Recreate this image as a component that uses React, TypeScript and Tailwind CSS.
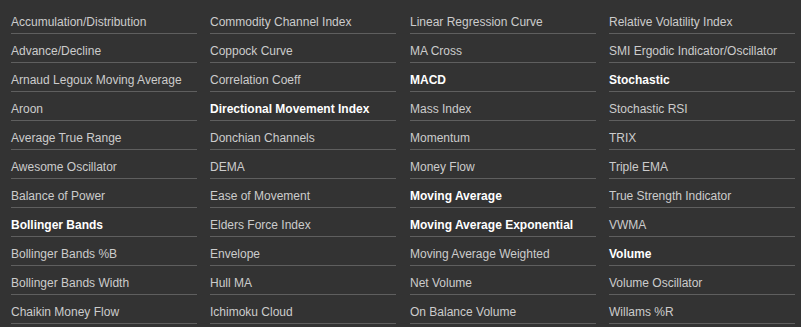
const columns: string[][] = [
  [
    'Accumulation/Distribution',
    'Advance/Decline',
    'Arnaud Legoux Moving Average',
    'Aroon',
    'Average True Range',
    'Awesome Oscillator',
    'Balance of Power',
    '*Bollinger Bands',
    'Bollinger Bands %B',
    'Bollinger Bands Width',
    'Chaikin Money Flow',
  ],
  [
    'Commodity Channel Index',
    'Coppock Curve',
    'Correlation Coeff',
    '*Directional Movement Index',
    'Donchian Channels',
    'DEMA',
    'Ease of Movement',
    'Elders Force Index',
    'Envelope',
    'Hull MA',
    'Ichimoku Cloud',
  ],
  [
    'Linear Regression Curve',
    'MA Cross',
    '*MACD',
    'Mass Index',
    'Momentum',
    'Money Flow',
    '*Moving Average',
    '*Moving Average Exponential',
    'Moving Average Weighted',
    'Net Volume',
    'On Balance Volume',
  ],
  [
    'Relative Volatility Index',
    'SMI Ergodic Indicator/Oscillator',
    '*Stochastic',
    'Stochastic RSI',
    'TRIX',
    'Triple EMA',
    'True Strength Indicator',
    'VWMA',
    '*Volume',
    'Volume Oscillator',
    'Willams %R',
  ],
]

// columns sit on a ~199.3px pitch, so the third gap is a pixel wider
const colMargins = ['', 'ml-[13px]', 'ml-[14px]', 'ml-[13px]']

export default function App() {
  return (
    <div className="w-[801px] h-[327px] bg-[#333333] pt-[5px] pl-[11px] overflow-hidden font-['Liberation_Sans',Arial,sans-serif] text-[12px]">
      <div className="flex">
        {columns.map((col, i) => (
          <ul key={i} className={`w-[186px] flex flex-col ${colMargins[i]}`}>
            {col.map((name) => (
              <IndicatorItem key={name} name={name} />
            ))}
          </ul>
        ))}
      </div>
    </div>
  )
}

function IndicatorItem({ name }: { name: string }) {
  const featured = name.startsWith('*')
  const label = featured ? name.slice(1) : name
  return (
    <li
      className={`h-[29px] pt-[10px] leading-[14px] border-b border-[#5f5f5f] whitespace-nowrap cursor-pointer hover:text-white ${
        featured ? 'font-bold text-white' : 'text-[#cccccc]'
      }`}
    >
      {label}
    </li>
  )
}
